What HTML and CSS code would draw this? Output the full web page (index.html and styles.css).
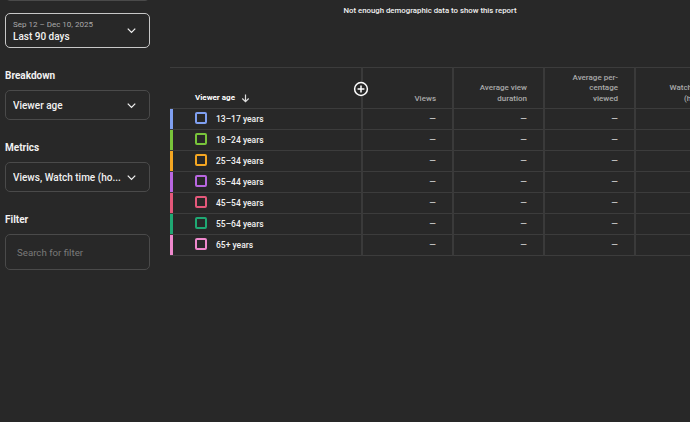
FILE: index.html
```html
<!DOCTYPE html>
<html lang="en">
<head>
<meta charset="UTF-8">
<meta name="viewport" content="width=device-width, initial-scale=1.0">
<link rel="stylesheet" href="styles.css">
</head>
<body>

<div class="page">
  <!-- left controls -->
  <aside class="sidebar">
    <div class="select select-cut"></div>

    <div class="select select-date">
      <div class="select-text">
        <div class="select-sub">Sep 12 – Dec 10, 2025</div>
        <div class="select-main">Last 90 days</div>
      </div>
      <svg class="chevron" viewBox="0 0 24 24"><path d="M6 9l6 6 6-6" /></svg>
    </div>

    <div class="group">
      <div class="group-label">Breakdown</div>
      <div class="select">
        <div class="select-main">Viewer age</div>
        <svg class="chevron" viewBox="0 0 24 24"><path d="M6 9l6 6 6-6" /></svg>
      </div>
    </div>

    <div class="group">
      <div class="group-label">Metrics</div>
      <div class="select">
        <div class="select-main">Views, Watch time (ho...</div>
        <svg class="chevron" viewBox="0 0 24 24"><path d="M6 9l6 6 6-6" /></svg>
      </div>
    </div>

    <div class="group">
      <div class="group-label">Filter</div>
      <div class="select select-search">
        <div class="placeholder">Search for filter</div>
      </div>
    </div>
  </aside>

  <!-- report -->
  <main class="report">
    <div class="notice">Not enough demographic data to show this report</div>

    <table class="report-table">
      <colgroup>
        <col class="col-dim"><col class="col-num"><col class="col-num"><col class="col-num"><col class="col-last">
      </colgroup>
      <tr class="head">
        <th class="dim-head">
          <span class="sort">Viewer age
            <svg class="arrow" viewBox="0 0 12 12"><path d="M6 1.5v8M2.5 6l3.5 3.5L9.5 6" /></svg>
          </span>
          <svg class="add" viewBox="0 0 16 16"><circle cx="8" cy="8" r="6.4" /><path d="M8 4.6v6.8M4.6 8h6.8" /></svg>
        </th>
        <th>Views</th>
        <th>Average view<br>duration</th>
        <th>Average per-<br>centage<br>viewed</th>
        <th>Watch time<br>(hours)</th>
      </tr>
      <tr><td class="dim" style="--c:#7f9ff0"><span class="box"></span>13–17 years</td><td>—</td><td>—</td><td>—</td><td></td></tr>
      <tr><td class="dim" style="--c:#78c43a"><span class="box"></span>18–24 years</td><td>—</td><td>—</td><td>—</td><td></td></tr>
      <tr><td class="dim" style="--c:#f4a622"><span class="box"></span>25–34 years</td><td>—</td><td>—</td><td>—</td><td></td></tr>
      <tr><td class="dim" style="--c:#b866e0"><span class="box"></span>35–44 years</td><td>—</td><td>—</td><td>—</td><td></td></tr>
      <tr><td class="dim" style="--c:#e4587a"><span class="box"></span>45–54 years</td><td>—</td><td>—</td><td>—</td><td></td></tr>
      <tr><td class="dim" style="--c:#1fa873"><span class="box"></span>55–64 years</td><td>—</td><td>—</td><td>—</td><td></td></tr>
      <tr><td class="dim" style="--c:#ee88cc"><span class="box"></span>65+ years</td><td>—</td><td>—</td><td>—</td><td></td></tr>
    </table>
  </main>
</div>

</body>
</html>
```

FILE: styles.css
```css
body {
  margin: 0;
  background: #282828;
  color: #f1f1f1;
  font-family: Roboto, "Noto Sans", Arial, sans-serif;
  overflow: hidden;
}
.page {
  display: flex;
  height: 422px;
}

/* sidebar */
.sidebar {
  width: 145px;
  padding-left: 5px;
  flex-shrink: 0;
}
.select {
  box-sizing: border-box;
  height: 30px;
  border: 1px solid #4a4a4a;
  border-radius: 5px;
  display: flex;
  align-items: center;
  justify-content: space-between;
  padding: 0 10px 0 7px;
}
.select-cut {
  margin-top: -29px;
}
.select-date {
  margin-top: 12px;
  height: 35px;
  border: 1.5px solid #c8c8c8;
}
.select-sub {
  font-size: 8px;
  color: #aaa;
  line-height: 11px;
}
.select-main {
  font-size: 10px;
  font-weight: 500;
  line-height: 13px;
  white-space: nowrap;
  overflow: hidden;
}
.chevron {
  flex-shrink: 0;
  width: 15px;
  height: 15px;
  fill: none;
  stroke: #f1f1f1;
  stroke-width: 2;
}
.group {
  margin-top: 20px;
}
.group-label {
  font-size: 10px;
  font-weight: 700;
  line-height: 16px;
  margin-bottom: 6px;
}
.select-search {
  height: 36px;
  padding-left: 11px;
}
.placeholder {
  font-size: 9.7px;
  color: #7a7a7a;
}

/* report */
.report {
  margin-left: 20px;
  flex: 1;
  overflow: hidden;
}
.notice {
  text-align: center;
  font-size: 7.8px;
  font-weight: 500;
  padding-top: 6px;
  height: 67px;
  box-sizing: border-box;
}
.report-table {
  border-collapse: collapse;
  table-layout: fixed;
  width: 556px;
}
.col-dim { width: 192px; }
.col-num { width: 91px; }
.col-last { width: 91px; }
.report-table th,
.report-table td {
  border-top: 1px solid #3c3c3c;
  border-bottom: 1px solid #3c3c3c;
  border-left: 2px solid #3a3a3a;
  padding: 0 16px 0 0;
  text-align: right;
  white-space: nowrap;
  overflow: hidden;
}
.report-table th:first-child,
.report-table td:first-child {
  border-left: none;
}
.head th {
  height: 36px;
  vertical-align: bottom;
  padding-bottom: 4px;
  font-size: 8px;
  font-weight: 500;
  color: #aaa;
  line-height: 10.5px;
}
.report-table .dim-head {
  position: relative;
  text-align: left;
  padding-left: 25px;
  overflow: visible;
}
.sort {
  color: #fff;
  font-weight: 700;
  font-size: 8px;
  display: inline-flex;
  align-items: center;
  gap: 5px;
}
.arrow {
  width: 11px;
  height: 11px;
  fill: none;
  stroke: #ddd;
  stroke-width: 1.3;
}
.add {
  position: absolute;
  right: -8px;
  top: 13px;
  width: 16px;
  height: 16px;
  fill: #282828;
  stroke: #fff;
  stroke-width: 1.5;
  z-index: 1;
}
.report-table td {
  height: 20px;
  font-size: 8.5px;
  color: #e8e8e8;
}
.report-table .dim {
  text-align: left;
  padding-left: 22px;
  box-shadow: inset 3px 0 0 var(--c);
  font-weight: 500;
  color: #f1f1f1;
}
.box {
  display: inline-block;
  box-sizing: border-box;
  width: 12px;
  height: 12px;
  border: 2px solid var(--c);
  border-radius: 2px;
  vertical-align: middle;
  margin: -2px 9px 0 3px;
}
```
